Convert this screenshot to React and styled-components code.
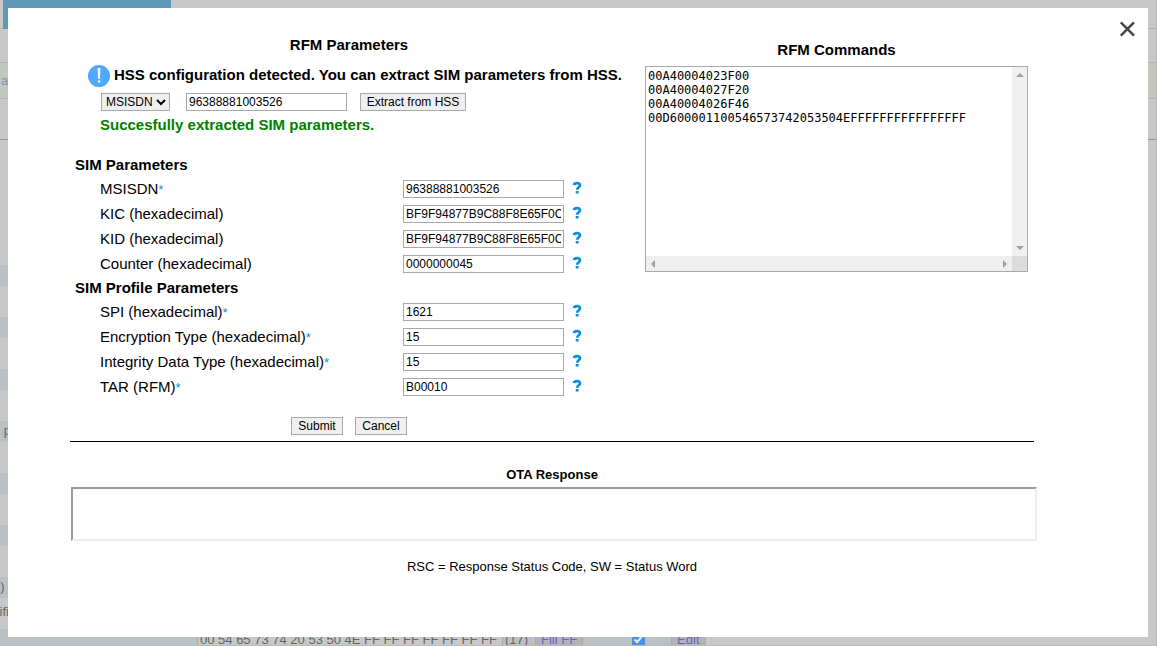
import React, { useState } from "react";
import styled, { createGlobalStyle } from "styled-components";

const simFields = [
  { id: "msisdn", label: "MSISDN", required: true, value: "96388881003526" },
  { id: "kic", label: "KIC (hexadecimal)", value: "BF9F94877B9C88F8E65F0C1A2B3D4E5F" },
  { id: "kid", label: "KID (hexadecimal)", value: "BF9F94877B9C88F8E65F0C1A2B3D4E5F" },
  { id: "counter", label: "Counter (hexadecimal)", value: "0000000045" },
];

const profileFields = [
  { id: "spi", label: "SPI (hexadecimal)", required: true, value: "1621" },
  { id: "encryption", label: "Encryption Type (hexadecimal)", required: true, value: "15" },
  { id: "integrity", label: "Integrity Data Type (hexadecimal)", required: true, value: "15" },
  { id: "tar", label: "TAR (RFM)", required: true, value: "B00010" },
];

const rfmCommands = [
  "00A40004023F00",
  "00A40004027F20",
  "00A40004026F46",
  "00D600001100546573742053504EFFFFFFFFFFFFFFFF",
].join("\n");

// rows of the file list behind the dialog
const listRows = ["", "", "", "n p", "", "", "0)"];

const arrows = {
  up: "M0 4 4 0 8 4z",
  down: "M0 0 8 0 4 4z",
  left: "M4 0 4 8 0 4z",
  right: "M0 0 4 4 0 8z",
};

const Arrow = ({ to }) => {
  const upright = to === "up" || to === "down";
  return (
    <svg width={upright ? 8 : 4} height={upright ? 4 : 8}>
      <path d={arrows[to]} fill="#a0a0a0" />
    </svg>
  );
};

const Field = ({ id, label, required, value }) => {
  const [text, setText] = useState(value);
  return (
    <FieldRow>
      <FieldLabel htmlFor={id}>
        {label}
        {required ? <Star>*</Star> : null}
      </FieldLabel>
      <TextInput id={id} value={text} onChange={(e) => setText(e.target.value)} />
      <HelpButton type="button" aria-label={`Help for ${label}`}>
        <svg width="10" height="13" viewBox="0 0 10 13">
          <path d="M1.8 4C2.6 1.7 8 1.3 8 4.2 8 6.3 5.2 6.2 5.2 8.8" fill="none" stroke="#0a8fdc" strokeWidth="2.7" />
          <rect x="3.7" y="10" width="2.9" height="2.5" rx="0.5" fill="#0a8fdc" />
        </svg>
      </HelpButton>
    </FieldRow>
  );
};

const BackPage = () => (
  <Back aria-hidden="true" inert>
    <TabBar>
      <Tab />
    </TabBar>
    <Strip $height={34} />
    <Strip $height={36} $green>
      a
    </Strip>
    <Strip $height={41} $dark />
    <List>
      {listRows.map((text, i) => (
        <React.Fragment key={i}>
          <ListRow>{text}</ListRow>
          <ListGap>{i === 6 ? "tifi" : ""}</ListGap>
        </React.Fragment>
      ))}
      <EditRow>
        <HexInput readOnly tabIndex={-1} aria-label="Content" value="00 54 65 73 74 20 53 50 4E FF FF FF FF FF FF FF" />
        <Count>(17)</Count>
        <BackButton tabIndex={-1}>Fill FF</BackButton>
        <BackCheck type="checkbox" aria-label="Select" defaultChecked tabIndex={-1} />
        <BackButton tabIndex={-1}>Edit</BackButton>
      </EditRow>
    </List>
  </Back>
);

export default function App() {
  const [type, setType] = useState("MSISDN");
  const [subscriber, setSubscriber] = useState("96388881003526");
  const [commands, setCommands] = useState(rfmCommands);

  return (
    <>
      <GlobalStyle />
      <BackPage />
      <Overlay>
        <Dialog role="dialog" aria-label="RFM Parameters">
          <CloseButton type="button" aria-label="Close">
            <svg width="16" height="16" viewBox="0 0 16 16">
              <path d="M1.8 1.3 15 14.7M15 1.3 1.8 14.7" stroke="#444" strokeWidth="2.4" />
            </svg>
          </CloseButton>

          <Columns>
            <Parameters onSubmit={(e) => e.preventDefault()}>
              <Title>RFM Parameters</Title>
              <Notice>
                <svg width="22" height="24" viewBox="0 0 22 24">
                  <circle cx="11" cy="13" r="10.6" fill="#dcdcdc" />
                  <circle cx="11" cy="12" r="11" fill="#50a8ff" />
                  <path d="M9.6 4h2.8l-.4 10.8H10zM9.8 16.4h2.4v2.2H9.8z" fill="#fff" />
                </svg>
                HSS configuration detected. You can extract SIM parameters from HSS.
              </Notice>
              <ExtractRow>
                <TypeSelect aria-label="Identifier type" value={type} onChange={(e) => setType(e.target.value)}>
                  <option>MSISDN</option>
                  <option>IMSI</option>
                </TypeSelect>
                <TextInput aria-label="Identifier" value={subscriber} onChange={(e) => setSubscriber(e.target.value)} />
                <ExtractButton type="button">Extract from HSS</ExtractButton>
              </ExtractRow>
              <Success>Succesfully extracted SIM parameters.</Success>

              <SectionTitle $first>SIM Parameters</SectionTitle>
              <Fields>
                {simFields.map((f) => (
                  <Field key={f.id} {...f} />
                ))}
              </Fields>
              <SectionTitle>SIM Profile Parameters</SectionTitle>
              <Fields>
                {profileFields.map((f) => (
                  <Field key={f.id} {...f} />
                ))}
              </Fields>

              <Actions>
                <Button type="submit">Submit</Button>
                <Button type="button">Cancel</Button>
              </Actions>
            </Parameters>

            <Commands>
              <Title as="label" htmlFor="commands">
                RFM Commands
              </Title>
              <CommandFrame>
                <CommandArea id="commands" wrap="off" value={commands} onChange={(e) => setCommands(e.target.value)} />
                <ScrollTrack $vertical>
                  <Arrow to="up" />
                  <Arrow to="down" />
                </ScrollTrack>
                <ScrollTrack>
                  <Arrow to="left" />
                  <Arrow to="right" />
                </ScrollTrack>
                <ScrollCorner />
              </CommandFrame>
            </Commands>
          </Columns>

          <Response>
            <ResponseTitle>OTA Response</ResponseTitle>
            <ResponseBox />
            <Legend>RSC = Response Status Code, SW = Status Word</Legend>
          </Response>
        </Dialog>
      </Overlay>
    </>
  );
}

const GlobalStyle = createGlobalStyle`
  * {
    box-sizing: border-box;
  }
  html, body, #root {
    height: 100%;
  }
  body {
    margin: 0;
    overflow: hidden;
    background: #c8c8c8;
    color: #000;
    font-family: "Liberation Sans", Arial, sans-serif;
    font-size: 15px;
    line-height: 18px;
  }
`;

/* page behind the dialog */

const Back = styled.div`
  height: 100%;
  overflow: hidden;
  border-right: 1px solid #b9b9b9;
  border-bottom: 1px solid #b9b9b9;
  color: #666;
  font-size: 13px;
`;

const TabBar = styled.div`
  height: 29px;
  padding-left: 3px;
  border-bottom: 1px solid #b3b3b3;
`;

const Tab = styled.div`
  width: 168px;
  height: 29px;
  background: #5f97b8;
`;

const Strip = styled.div`
  height: ${(p) => p.$height}px;
  padding: 9px 1px;
  border-bottom: 1px solid ${(p) => (p.$dark ? "#999" : "#b3b3b3")};
  background: ${(p) => (p.$green ? "#c2c8bd" : "transparent")};
  color: #7a93b0;
`;

const List = styled.div`
  width: fit-content;
  padding-top: 125px;
`;

const ListRow = styled.div`
  height: 21px;
  padding-top: 1px;
  background: #b9c1c6;
  white-space: pre;
  text-indent: -7px;
`;

const ListGap = styled.div`
  height: 31px;
  padding-top: 5px;
  text-indent: -4px;
`;

const EditRow = styled.div`
  display: flex;
  align-items: flex-start;
  height: 21px;
  padding-left: 197px;
  background: #b9c1c6;
`;

const HexInput = styled.input`
  width: 306px;
  height: 21px;
  padding: 0 2px;
  border: 1px solid #aaa;
  background: #c8c8c8;
  color: #666;
  font: 13px "Liberation Sans", Arial, sans-serif;
`;

const Count = styled.span`
  width: 32px;
  padding: 2px;
`;

const BackButton = styled.button`
  height: 21px;
  padding: 0 5px;
  border: 1px solid #aaa;
  background: #b3b3b3;
  color: #6a62d0;
  font: 13px "Liberation Sans", Arial, sans-serif;
`;

const BackCheck = styled.input`
  width: 13px;
  height: 13px;
  margin: 4px 26px 0 49px;
  opacity: 0.6;
`;

/* dialog */

const Overlay = styled.div`
  position: fixed;
  inset: 0;
  padding: 8px 9px 9px 8px;
`;

const Dialog = styled.div`
  position: relative;
  height: 100%;
  padding: 28px 114px 28px 62px;
  overflow: hidden;
  background: #fff;
`;

const CloseButton = styled.button`
  position: absolute;
  top: 13px;
  right: 13px;
  display: flex;
  padding: 0;
  border: 0;
  background: none;
`;

const Columns = styled.div`
  display: flex;
  gap: 17px;
  padding: 0 6px 6px 0;
  border-bottom: 1px solid #000;
`;

const Parameters = styled.form`
  flex: 1;
  min-width: 0;
`;

const Title = styled.h1`
  display: block;
  margin: 0;
  font-size: 15px;
  font-weight: bold;
  line-height: 18px;
  text-align: center;
`;

const Notice = styled.div`
  display: flex;
  gap: 4px;
  height: 24px;
  margin-top: 10px;
  padding-left: 18px;
  line-height: 22px;
  font-weight: bold;
  white-space: nowrap;
`;

const ExtractRow = styled.div`
  display: flex;
  margin-top: 5px;
  padding-left: 31px;
`;

const TextInput = styled.input`
  width: 161px;
  height: 18px;
  padding: 1px 2px;
  border: 1px solid #a9a9a9;
  background: #fff;
  color: #000;
  font: 12px "Liberation Sans", Arial, sans-serif;
`;

const TypeSelect = styled.select`
  width: 69px;
  height: 18px;
  margin-right: 16px;
  border: 1px solid #a9a9a9;
  border-radius: 0;
  background: #efefef;
  color: #000;
  font: 12px "Liberation Sans", Arial, sans-serif;
`;

const Button = styled.button`
  min-width: 52px;
  height: 18px;
  padding: 0 5px;
  border: 1px solid #a9a9a9;
  background: #efefef;
  color: #000;
  font: 12px "Liberation Sans", Arial, sans-serif;
  white-space: nowrap;
`;

const ExtractButton = styled(Button)`
  min-width: 106px;
  margin-left: 13px;
`;

const Success = styled.div`
  margin-top: 5px;
  padding-left: 30px;
  color: #008000;
  font-weight: bold;
`;

const SectionTitle = styled.h2`
  margin: ${(p) => (p.$first ? "22px" : "6px")} 0 6px;
  padding-left: 5px;
  font-size: 15px;
  line-height: 18px;
`;

const Fields = styled.div`
  display: grid;
  gap: 7px;
  padding-left: 30px;
`;

const FieldRow = styled.div`
  display: grid;
  grid-template-columns: 1fr 161px 56px;
  column-gap: 8px;
  height: 18px;
`;

const FieldLabel = styled.label`
  white-space: nowrap;
`;

const Star = styled.span`
  color: #0a8fdc;
  font-size: 13px;
`;

const HelpButton = styled.button`
  justify-self: start;
  display: flex;
  align-items: flex-start;
  padding: 1px 0;
  border: 0;
  background: none;
`;

const Actions = styled.div`
  display: flex;
  justify-content: center;
  gap: 12px;
  margin-top: 21px;
`;

const Commands = styled.div`
  width: 383px;
  padding-top: 5px;
`;

const CommandFrame = styled.div`
  display: grid;
  grid-template-columns: 1fr 15px;
  grid-template-rows: 1fr 15px;
  height: 206px;
  margin-top: 7px;
  border: 1px solid #a9a9a9;
`;

const CommandArea = styled.textarea`
  width: 100%;
  height: 100%;
  padding: 2px;
  overflow: auto;
  resize: none;
  border: 0;
  background: #fff;
  color: #000;
  font: 12px/14px "DejaVu Sans Mono", monospace;
`;

const ScrollTrack = styled.div`
  display: flex;
  flex-direction: ${(p) => (p.$vertical ? "column" : "row")};
  align-items: center;
  justify-content: space-between;
  padding: ${(p) => (p.$vertical ? "6px 0" : "0 5px")};
  background: #f0f0f0;
`;

const ScrollCorner = styled.div`
  background: #dcdcdc;
`;

const Response = styled.section`
  margin-top: 24px;
  font-size: 13px;
`;

const ResponseTitle = styled.h2`
  margin: 0 0 3px;
  font-size: 13px;
  line-height: 18px;
  text-align: center;
`;

const ResponseBox = styled.div`
  height: 54px;
  margin: 0 -3px 0 1px;
  border: 2px solid;
  border-color: #9a9a9a #eee #eee #9a9a9a;
`;

const Legend = styled.p`
  margin: 17px 0 0;
  text-align: center;
`;
